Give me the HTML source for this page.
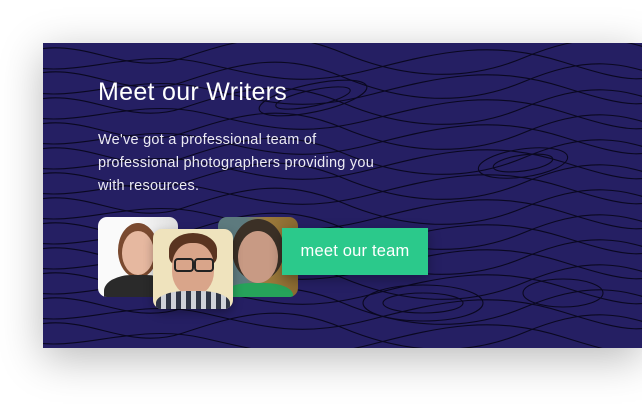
<!DOCTYPE html>
<html><head><meta charset="utf-8"><style>
html,body{margin:0;padding:0;background:#fff;width:642px;height:405px;overflow:hidden;font-family:"Liberation Sans",sans-serif}
.panel{position:absolute;left:43px;top:43px;width:599px;height:305px;background:#251f63;box-shadow:0 10px 40px rgba(0,0,0,.28);overflow:hidden}
svg.topo{position:absolute;left:0;top:0}
h1{position:absolute;left:55px;top:35px;margin:0;font-weight:normal;color:#fff;font-size:25px;letter-spacing:.3px}
p{position:absolute;left:55px;top:86px;margin:0;color:#ecebf4;font-size:14.5px;line-height:23px;letter-spacing:.25px;width:298px}
.ph{position:absolute;width:80px;height:80px;border-radius:9px;overflow:hidden}
.btn{position:absolute;left:239px;top:185px;width:146px;height:47px;background:#2bc98b;color:#fff;font-size:16.5px;line-height:47px;text-align:center;box-shadow:0 4px 12px rgba(0,0,0,.3);letter-spacing:.2px}
</style></head><body>
<div class="panel">
<svg class="topo" width="599" height="305" viewBox="0 0 599 305" fill="none" stroke="#0a0820" stroke-width="1.1">
<defs>
<path id="w" d="M-20 0 C40 -20 80 25 140 5 S240 -25 300 0 S420 30 480 5 S580 -20 640 10"/>
<path id="v" d="M-20 0 C30 15 90 -18 160 -2 S260 22 330 4 S450 -25 520 -3 S600 18 640 2"/>
</defs>
<g>
<use href="#w" y="10"/><use href="#v" y="22"/><use href="#w" y="34"/><use href="#v" y="47"/>
<use href="#w" y="60"/><use href="#v" y="72"/><use href="#w" y="85"/><use href="#v" y="97"/>
<use href="#w" y="110"/><use href="#v" y="122"/><use href="#w" y="135"/><use href="#v" y="147"/>
<use href="#w" y="160"/><use href="#v" y="172"/><use href="#w" y="185"/><use href="#v" y="197"/>
<use href="#w" y="210"/><use href="#v" y="222"/><use href="#w" y="235"/><use href="#v" y="247"/>
<use href="#w" y="260"/><use href="#v" y="272"/><use href="#w" y="285"/><use href="#v" y="297"/>
</g>
<ellipse cx="480" cy="120" rx="45" ry="14" transform="rotate(-8 480 120)"/>
<ellipse cx="480" cy="120" rx="30" ry="8" transform="rotate(-8 480 120)"/>
<ellipse cx="270" cy="55" rx="55" ry="14" transform="rotate(-12 270 55)"/>
<ellipse cx="270" cy="55" rx="38" ry="8" transform="rotate(-12 270 55)"/>
<ellipse cx="380" cy="260" rx="60" ry="18"/><ellipse cx="380" cy="260" rx="40" ry="10"/>
<ellipse cx="520" cy="250" rx="40" ry="14"/>
</svg>
<h1>Meet our Writers</h1>
<p>We've got a professional team of professional photographers providing you with resources.</p>
<div class="ph" style="left:55px;top:174px;background:linear-gradient(90deg,#fafafa 0 45%,#ddd 100%)">
<div style="position:absolute;left:20px;top:6px;width:40px;height:55px;border-radius:50%;background:#7a4a30"></div>
<div style="position:absolute;left:24px;top:14px;width:32px;height:44px;border-radius:50%;background:#e6b8a0"></div>
<div style="position:absolute;left:6px;top:58px;width:70px;height:40px;border-radius:40% 40% 0 0;background:#2a2a2a"></div>
</div>
<div class="ph" style="left:175px;top:174px;background:linear-gradient(90deg,#5d7a7e 0 35%,#9c7a3c 60%,#8a6a30)">
<div style="position:absolute;left:14px;top:2px;width:52px;height:62px;border-radius:50%;background:#3b3026"></div>
<div style="position:absolute;left:20px;top:14px;width:40px;height:52px;border-radius:50%;background:#c89a84"></div>
<div style="position:absolute;left:5px;top:66px;width:70px;height:30px;border-radius:40% 40% 0 0;background:#26a35a"></div>
</div>
<div class="ph" style="left:110px;top:186px;background:#efe3bd;box-shadow:0 4px 10px rgba(0,0,0,.3)">
<div style="position:absolute;left:16px;top:4px;width:48px;height:34px;border-radius:50% 50% 30% 30%;background:#5a3420"></div>
<div style="position:absolute;left:19px;top:14px;width:42px;height:52px;border-radius:45%;background:#d9a58a"></div>
<div style="position:absolute;left:21px;top:29px;width:16px;height:10px;border:2px solid #222;border-radius:4px"></div>
<div style="position:absolute;left:41px;top:29px;width:16px;height:10px;border:2px solid #222;border-radius:4px"></div>
<div style="position:absolute;left:3px;top:62px;width:74px;height:30px;border-radius:40% 40% 0 0;background:repeating-linear-gradient(90deg,#2e3444 0 5px,#cfd2d8 5px 10px)"></div>
</div>
<div class="btn">meet our team</div>
</div>
</body></html>
